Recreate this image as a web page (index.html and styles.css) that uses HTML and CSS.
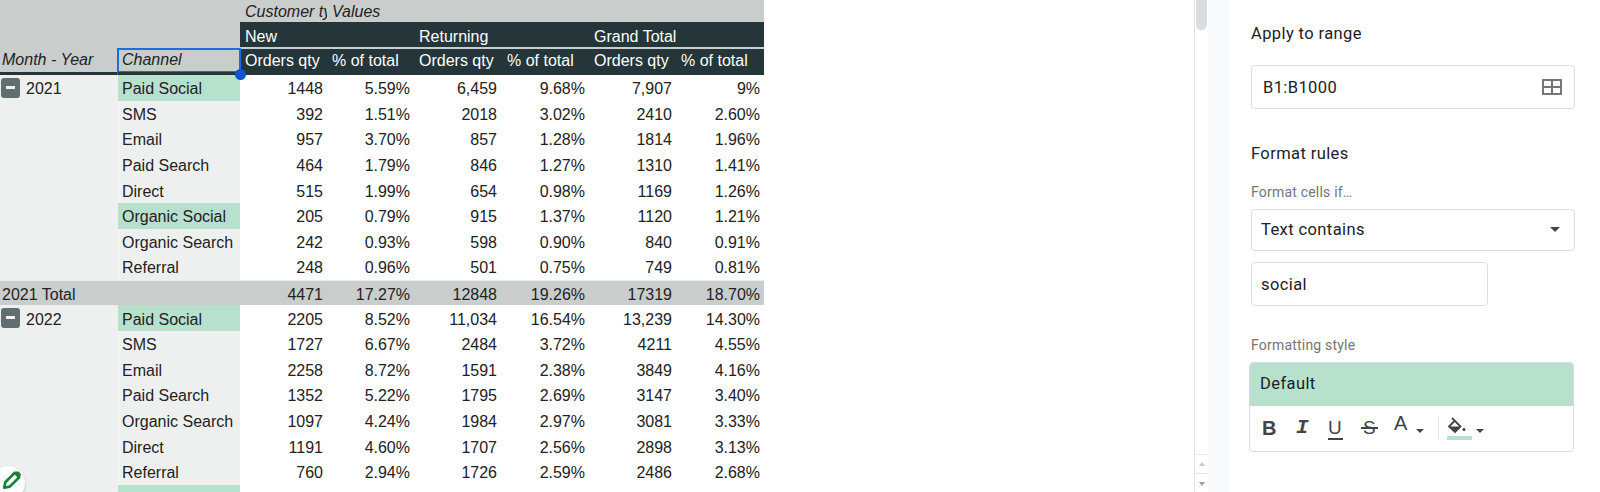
FILE: index.html
```html
<!DOCTYPE html>
<html lang="en">
<head>
    <meta charset="UTF-8">
    <meta name="viewport" content="width=device-width, initial-scale=1.0">
    <title>Conditional format rules</title>
    <link rel="stylesheet" href="styles.css">
</head>
<body>
    <div class="page">
        <div class="sheet">
            <div class="row head-top">
                <div class="cell"></div>
                <div class="cell"></div>
                <div class="cell clip em">Customer type</div>
                <div class="cell em">Values</div>
                <div class="cell"></div><div class="cell"></div><div class="cell"></div><div class="cell"></div>
            </div>
            <div class="row head-group">
                <div class="cell blank"></div>
                <div class="cell blank"></div>
                <div class="cell">New</div>
                <div class="cell"></div>
                <div class="cell">Returning</div>
                <div class="cell"></div>
                <div class="cell">Grand Total</div>
                <div class="cell"></div>
            </div>
            <div class="row head-cols">
                <div class="cell blank em">Month - Year</div>
                <div class="cell blank em selected">Channel</div>
                <div class="cell">Orders qty</div>
                <div class="cell">% of total</div>
                <div class="cell">Orders qty</div>
                <div class="cell">% of total</div>
                <div class="cell">Orders qty</div>
                <div class="cell">% of total</div>
            </div>

            <div class="row body-row">
                <div class="cell side year"><span class="toggle"></span>2021</div>
                <div class="cell side hit">Paid Social</div>
                <div class="cell num">1448</div><div class="cell num">5.59%</div><div class="cell num">6,459</div><div class="cell num">9.68%</div><div class="cell num">7,907</div><div class="cell num">9%</div>
            </div>
            <div class="row body-row">
                <div class="cell side"></div>
                <div class="cell side">SMS</div>
                <div class="cell num">392</div><div class="cell num">1.51%</div><div class="cell num">2018</div><div class="cell num">3.02%</div><div class="cell num">2410</div><div class="cell num">2.60%</div>
            </div>
            <div class="row body-row">
                <div class="cell side"></div>
                <div class="cell side">Email</div>
                <div class="cell num">957</div><div class="cell num">3.70%</div><div class="cell num">857</div><div class="cell num">1.28%</div><div class="cell num">1814</div><div class="cell num">1.96%</div>
            </div>
            <div class="row body-row">
                <div class="cell side"></div>
                <div class="cell side">Paid Search</div>
                <div class="cell num">464</div><div class="cell num">1.79%</div><div class="cell num">846</div><div class="cell num">1.27%</div><div class="cell num">1310</div><div class="cell num">1.41%</div>
            </div>
            <div class="row body-row">
                <div class="cell side"></div>
                <div class="cell side">Direct</div>
                <div class="cell num">515</div><div class="cell num">1.99%</div><div class="cell num">654</div><div class="cell num">0.98%</div><div class="cell num">1169</div><div class="cell num">1.26%</div>
            </div>
            <div class="row body-row">
                <div class="cell side"></div>
                <div class="cell side hit">Organic Social</div>
                <div class="cell num">205</div><div class="cell num">0.79%</div><div class="cell num">915</div><div class="cell num">1.37%</div><div class="cell num">1120</div><div class="cell num">1.21%</div>
            </div>
            <div class="row body-row">
                <div class="cell side"></div>
                <div class="cell side">Organic Search</div>
                <div class="cell num">242</div><div class="cell num">0.93%</div><div class="cell num">598</div><div class="cell num">0.90%</div><div class="cell num">840</div><div class="cell num">0.91%</div>
            </div>
            <div class="row body-row">
                <div class="cell side"></div>
                <div class="cell side">Referral</div>
                <div class="cell num">248</div><div class="cell num">0.96%</div><div class="cell num">501</div><div class="cell num">0.75%</div><div class="cell num">749</div><div class="cell num">0.81%</div>
            </div>
            <div class="row body-row total">
                <div class="cell wide">2021 Total</div>
                <div class="cell"></div>
                <div class="cell num">4471</div><div class="cell num">17.27%</div><div class="cell num">12848</div><div class="cell num">19.26%</div><div class="cell num">17319</div><div class="cell num">18.70%</div>
            </div>
            <div class="row body-row">
                <div class="cell side year"><span class="toggle"></span>2022</div>
                <div class="cell side hit">Paid Social</div>
                <div class="cell num">2205</div><div class="cell num">8.52%</div><div class="cell num">11,034</div><div class="cell num">16.54%</div><div class="cell num">13,239</div><div class="cell num">14.30%</div>
            </div>
            <div class="row body-row">
                <div class="cell side"></div>
                <div class="cell side">SMS</div>
                <div class="cell num">1727</div><div class="cell num">6.67%</div><div class="cell num">2484</div><div class="cell num">3.72%</div><div class="cell num">4211</div><div class="cell num">4.55%</div>
            </div>
            <div class="row body-row">
                <div class="cell side"></div>
                <div class="cell side">Email</div>
                <div class="cell num">2258</div><div class="cell num">8.72%</div><div class="cell num">1591</div><div class="cell num">2.38%</div><div class="cell num">3849</div><div class="cell num">4.16%</div>
            </div>
            <div class="row body-row">
                <div class="cell side"></div>
                <div class="cell side">Paid Search</div>
                <div class="cell num">1352</div><div class="cell num">5.22%</div><div class="cell num">1795</div><div class="cell num">2.69%</div><div class="cell num">3147</div><div class="cell num">3.40%</div>
            </div>
            <div class="row body-row">
                <div class="cell side"></div>
                <div class="cell side">Organic Search</div>
                <div class="cell num">1097</div><div class="cell num">4.24%</div><div class="cell num">1984</div><div class="cell num">2.97%</div><div class="cell num">3081</div><div class="cell num">3.33%</div>
            </div>
            <div class="row body-row">
                <div class="cell side"></div>
                <div class="cell side">Direct</div>
                <div class="cell num">1191</div><div class="cell num">4.60%</div><div class="cell num">1707</div><div class="cell num">2.56%</div><div class="cell num">2898</div><div class="cell num">3.13%</div>
            </div>
            <div class="row body-row">
                <div class="cell side"></div>
                <div class="cell side">Referral</div>
                <div class="cell num">760</div><div class="cell num">2.94%</div><div class="cell num">1726</div><div class="cell num">2.59%</div><div class="cell num">2486</div><div class="cell num">2.68%</div>
            </div>
            <div class="row body-row">
                <div class="cell side"></div>
                <div class="cell side hit"></div>
            </div>

            <span class="handle"></span>
            <span class="pencil">
                <svg width="20" height="20" viewBox="0 0 18 18"><path d="M2 16l1-5 8.500-8.500 4 4L7 15z" fill="none" stroke="#188038" stroke-width="2.400" stroke-linejoin="round"/><path d="M11.500 2.500l4 4 1-1c.6-.6.6-1.800 0-2.500l-1.500-1.500c-.7-.6-1.900-.6-2.500 0z" fill="#188038"/></svg>
            </span>
        </div>

        <div class="scroller">
            <span class="scroll-thumb"></span>
            <div class="scroll-arrows">
                <span class="arrow-up"></span>
                <span class="arrow-line"></span>
                <span class="arrow-down"></span>
            </div>
        </div>
        <div class="gutter"></div>

        <div class="panel">
            <div class="panel-title range-title">Apply to range</div>
            <div class="field range-field">
                <span>B1:B1000</span>
                <svg class="grid-icon" width="20" height="16" viewBox="0 0 20 16"><path d="M1 1h18v14H1zM10 1v14M1 8h18" fill="none" stroke="#757575" stroke-width="2"/></svg>
            </div>
            <div class="panel-title rules-title">Format rules</div>
            <div class="panel-label cells-label">Format cells if…</div>
            <div class="field select-field">
                <span>Text contains</span>
                <span class="caret"></span>
            </div>
            <div class="field value-field">social</div>
            <div class="panel-label style-label">Formatting style</div>
            <div class="style-box">
                <div class="style-preview">Default</div>
                <div class="style-tools">
                    <span class="tool tool-b">B</span>
                    <span class="tool tool-i">I</span>
                    <span class="tool tool-u">U</span>
                    <span class="tool tool-s">S</span>
                    <span class="tool tool-a">A</span>
                    <span class="caret small"></span>
                    <span class="tool-sep"></span>
                    <span class="fill-tool">
                        <svg width="20" height="18" viewBox="0 0 20 18"><path d="M5 1l8.500 8.500L8 15 2 9.500 8 3.500" fill="none" stroke="#444" stroke-width="1.800"/><path d="M2 9.500h11.500L8 15z" fill="#444"/><circle cx="17" cy="12.500" r="1.500" fill="#444"/></svg>
                        <span class="fill-bar"></span>
                    </span>
                    <span class="caret small"></span>
                </div>
            </div>
        </div>
    </div>
</body>
</html>
```

FILE: styles.css
```css
html, body {
    margin: 0;
    padding: 0;
    background-color: white;
    overflow: hidden;
}

.page {
    display: flex;
    width: 1600px;
    height: 492px;
    overflow: hidden;
}

/* sheet */
.sheet {
    position: relative;
    width: 1194px;
    flex: none;
    font-family: "Liberation Sans", Arial, sans-serif;
    font-size: 16px;
    color: #222;
}

.row {
    display: grid;
    grid-template-columns: 118px 122px 87px 87px 88px 87px 87px 88px;
    width: 764px;
}

.cell {
    box-sizing: border-box;
    padding: 2px 5px 0 2px;
    white-space: nowrap;
    display: flex;
    align-items: center;
    min-width: 0;
}

.cell:nth-child(n+3) {
    padding-left: 5px;
}

.cell:nth-child(2) {
    padding-left: 4px;
}

.em {
    font-style: italic;
}

.clip {
    overflow: hidden;
    padding-right: 0;
}

.head-top {
    height: 22px;
    background-color: #c9cecd;
}

.head-group {
    height: 25px;
    background-color: #243639;
    color: white;
}

.head-group .cell {
    padding-top: 5px;
}

.head-cols {
    height: 28px;
    background-color: #243639;
    color: white;
    border-top: 2px solid #c9cecd;
    box-sizing: border-box;
}

.head-cols .cell {
    padding-top: 0;
    padding-bottom: 2px;
}

.blank {
    background-color: #c9cecd;
    color: #222;
}

.head-cols .blank {
    padding-bottom: 1px;
    border-bottom: 3px solid #243639;
}

.selected {
    box-shadow: 0 0 0 1px #1a6fe0, inset 0 0 0 1px #1a6fe0;
}

.body-row {
    height: 25.6px;
}

.body-row .cell {
    padding-top: 3px;
}

.num {
    justify-content: flex-end;
}

.body-row .num {
    padding-right: 4px;
}

.body-row .num:nth-child(5) {
    padding-right: 5px;
}

.side {
    background-color: #eef0ef;
}

.side + .side {
    border-left: 1px solid #f6f7f7;
    padding-left: 3px;
}

.cell.hit {
    background-color: #b7e1cd;
    border-left: 0;
    padding-left: 4px;
}

.year {
    padding-left: 1px;
    gap: 6px;
}

.toggle {
    position: relative;
    width: 19px;
    height: 20px;
    margin-top: -3px;
    border-radius: 3px;
    background-color: #5f6e6e;
    flex: none;
}

.toggle::after {
    content: "";
    position: absolute;
    left: 5px;
    right: 5px;
    top: 8px;
    height: 3px;
    background-color: #eef0ef;
}

.total {
    background-color: #c9cecd;
    border-top: 1px solid #eef0ef;
    box-sizing: border-box;
}

.handle {
    position: absolute;
    left: 235px;
    top: 69px;
    width: 11px;
    height: 11px;
    border-radius: 50%;
    background-color: #1155cc;
}

.pencil {
    position: absolute;
    left: -9px;
    top: 466px;
    width: 34px;
    height: 34px;
    box-sizing: border-box;
    padding: 4px 0 0 11px;
    border-radius: 50%;
    background-color: white;
    box-shadow: 0 1px 3px rgba(0, 0, 0, 0.2);
}

/* scroll strip */
.scroller {
    position: relative;
    width: 14px;
    flex: none;
    border-left: 1px solid #e1e3e6;
    box-sizing: border-box;
}

.scroll-thumb {
    display: block;
    width: 11px;
    height: 30px;
    margin-left: 1px;
    border-radius: 0 0 6px 6px;
    background-color: #dadce0;
}

.scroll-arrows {
    position: absolute;
    left: 0;
    right: 0;
    bottom: 0;
    height: 37px;
    border-top: 1px solid #e8eaed;
}

.arrow-line {
    position: absolute;
    left: 0;
    right: 0;
    top: 18px;
    height: 1px;
    background-color: #dfe4f7;
}

.arrow-up, .arrow-down {
    position: absolute;
    left: 4px;
    width: 0;
    height: 0;
    border-left: 3px solid transparent;
    border-right: 3px solid transparent;
}

.arrow-up {
    top: 7px;
    border-bottom: 4px solid #c4c7c5;
}

.arrow-down {
    top: 27px;
    border-top: 4px solid #9aa0a6;
}

.gutter {
    width: 21px;
    flex: none;
    background-color: #f8f9fa;
}

/* side panel */
.panel {
    flex: 1;
    padding-left: 22px;
    font-family: Roboto, "Liberation Sans", sans-serif;
    color: #202124;
    font-size: 16.500px;
    display: flex;
    flex-direction: column;
    align-items: flex-start;
}

.panel-title {
    letter-spacing: 0.4px;
    line-height: 20px;
}

.panel-label {
    font-size: 14px;
    color: #757575;
    letter-spacing: 0.2px;
    line-height: 18px;
}

.range-title {
    margin-top: 24px;
}

.field {
    box-sizing: border-box;
    border: 1px solid #dadce0;
    border-radius: 4px;
    display: flex;
    align-items: center;
    justify-content: space-between;
    letter-spacing: 0.4px;
    padding: 0 9px;
}

.range-field {
    width: 324px;
    height: 44px;
    margin-top: 21px;
    padding: 0 12px 0 11px;
}

.rules-title {
    margin-top: 35px;
}

.cells-label {
    margin-top: 19px;
}

.select-field {
    width: 324px;
    height: 42px;
    margin-top: 8px;
    padding-right: 14px;
    padding-bottom: 2px;
}

.value-field {
    width: 237px;
    height: 44px;
    margin-top: 11px;
}

.style-label {
    margin-top: 30px;
}

.style-box {
    box-sizing: border-box;
    width: 325px;
    margin-top: 8px;
    margin-left: -2px;
    border: 1px solid #dadce0;
    border-radius: 4px;
    overflow: hidden;
}

.style-preview {
    height: 43px;
    line-height: 41px;
    padding-left: 10px;
    background-color: #b7e1cd;
    letter-spacing: 0.4px;
}

.style-tools {
    height: 45px;
    display: flex;
    align-items: center;
    padding-left: 12px;
    padding-bottom: 1px;
    box-sizing: border-box;
    color: #444;
}

.tool {
    position: relative;
    font-family: "Liberation Sans", sans-serif;
    font-size: 19px;
    line-height: 20px;
    width: 33px;
}

.tool-b {
    font-weight: bold;
    font-size: 20px;
}

.tool-i {
    font-family: "Liberation Mono", monospace;
    font-style: italic;
    font-weight: bold;
    font-size: 21px;
    padding-left: 1px;
    width: 32px;
}

.tool-u::after {
    content: "";
    position: absolute;
    left: 0;
    top: 20px;
    width: 15px;
    height: 2px;
    background-color: #444;
}

.tool-s {
    padding-left: 2px;
    width: 31px;
}

.tool-s::after {
    content: "";
    position: absolute;
    left: 0;
    top: 9px;
    width: 17px;
    height: 2px;
    background-color: #444;
}

.tool-a {
    width: 22px;
    font-size: 20px;
    margin-top: -11px;
}

.tool-sep {
    width: 1px;
    height: 24px;
    margin: 0 8px 0 14px;
    background-color: #e3e5e8;
}

.fill-tool {
    width: 29px;
    display: flex;
    flex-direction: column;
}

.fill-bar {
    width: 25px;
    height: 4px;
    margin-top: 1px;
    background-color: #b7e1cd;
}

.caret {
    width: 0;
    height: 0;
    border-left: 5px solid transparent;
    border-right: 5px solid transparent;
    border-top: 5px solid #444;
}

.caret.small {
    margin-top: 6px;
    border-left-width: 4px;
    border-right-width: 4px;
    border-top-width: 4px;
}
```
